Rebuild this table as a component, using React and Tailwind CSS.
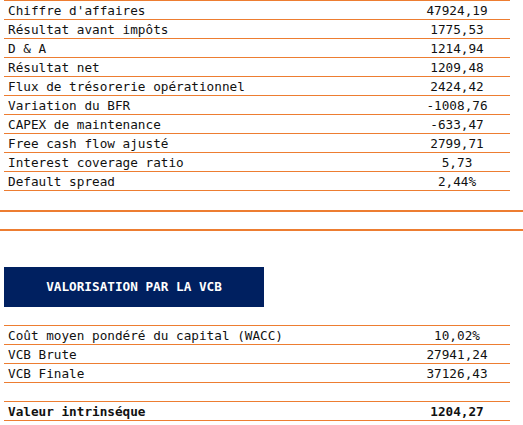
const rows = [
  ["Chiffre d'affaires", "47924,19"],
  ["Résultat avant impôts", "1775,53"],
  ["D & A", "1214,94"],
  ["Résultat net", "1209,48"],
  ["Flux de trésorerie opérationnel", "2424,42"],
  ["Variation du BFR", "-1008,76"],
  ["CAPEX de maintenance", "-633,47"],
  ["Free cash flow ajusté", "2799,71"],
  ["Interest coverage ratio", "5,73"],
  ["Default spread", "2,44%"],
];

const vcb = [
  ["Coût moyen pondéré du capital (WACC)", "10,02%"],
  ["VCB Brute", "27941,24"],
  ["VCB Finale", "37126,43"],
  ["", ""],
];

function Row({ label, value, bold }) {
  return (
    <div className={`flex h-[19px] border-b border-[#ED7D31] ${bold ? "font-bold" : ""}`}>
      <div className="w-[400px] pl-[4px] pt-[1px] flex items-center whitespace-pre">{label}</div>
      <div className="w-[106px] pt-[1px] flex items-center justify-center">{value}</div>
    </div>
  );
}

export default function App() {
  return (
    <div className="w-[523px] h-[425px] bg-white text-[#111] text-[12.7px] overflow-hidden" style={{ fontFamily: '"DejaVu Sans Mono", "Liberation Mono", monospace' }}>
      <div className="ml-[4px] w-[506px] border-t border-[#ED7D31]">
        {rows.map(([l, v]) => (
          <Row key={l} label={l} value={v} />
        ))}
      </div>

      <div className="mt-[19px] h-[2px] bg-[#ED7D31]" />
      <div className="mt-[17px] h-[2px] bg-[#ED7D31]" />

      <div className="mt-[36px] ml-[4px] w-[260px] h-[40px] bg-[#002060] text-white font-bold flex items-center justify-center">
        VALORISATION PAR LA VCB
      </div>

      <div className="mt-[18px] ml-[4px] w-[506px] border-t border-[#ED7D31]">
        {vcb.map(([l, v], i) => (
          <Row key={i} label={l} value={v} />
        ))}
        <Row label="Valeur intrinséque" value="1204,27" bold />
      </div>
    </div>
  );
}
